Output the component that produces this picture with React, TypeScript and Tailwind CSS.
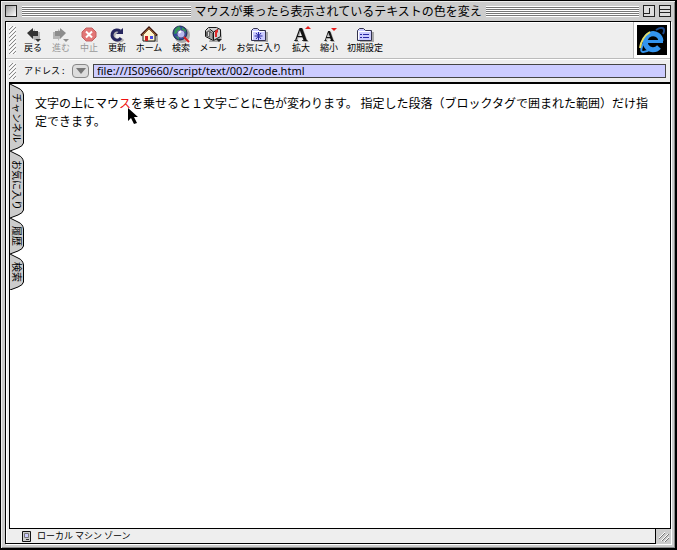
import type { ReactNode } from 'react';

const OUTLINE = '#181818';

interface Tool {
  label: string;
  width: string;
  icon: ReactNode;
  disabled?: boolean;
}

function ArrowIcon({ fill, flip = false }: { fill: string; flip?: boolean }) {
  return (
    <svg viewBox="0 0 20 20" className="size-5">
      <g transform={flip ? 'translate(19 0) scale(-1 1)' : undefined}>
        <path d="M7 10l5-5v3h5v7h-5v2z" fill="#b5b5b5" />
        <path d="M4 9l6-5v3h5v5h-5v3z" fill={fill} />
      </g>
      <path d="M12 15h6l-3 3z" fill={fill} />
    </svg>
  );
}

function StopIcon() {
  return (
    <svg viewBox="0 0 20 20" className="size-5">
      <path d="M7 4h6l4 4v5l-4 4H7l-4-4V8z" fill="#e27676" stroke="#c46060" />
      <path d="M7 7.500l6 6M13 7.500l-6 6" stroke="#fff" strokeWidth="2" />
    </svg>
  );
}

function RefreshIcon() {
  return (
    <svg viewBox="0 0 20 20" className="size-5" fill="none">
      <path d="M16 15a5 5 0 1 1-1-7" stroke="#b5b5b5" strokeWidth="3" />
      <path d="M14 14a5 5 0 1 1-1-7" stroke="#26265e" strokeWidth="3" />
      <path d="M9 10h7V4z" fill="#26265e" />
    </svg>
  );
}

function HomeIcon() {
  return (
    <svg viewBox="0 0 20 20" className="size-5">
      <path d="M6 18h13v-7l-3-2z" fill="#aaa" />
      <path d="M4 11l6-6 6 6v6H4z" fill="#fff5cc" stroke={OUTLINE} />
      <path d="M2 11.500l8-8 8 8" fill="none" stroke="#3b140c" strokeWidth="2" />
      <path d="M3.500 11l6.500-6.500 6.500 6.500" fill="none" stroke="#e09a55" />
      <path d="M6 12h3v5H6z" fill="#c22" />
      <path d="M11 12h3v3h-3z" fill="#4a4ae0" />
    </svg>
  );
}

function SearchIcon() {
  return (
    <svg viewBox="0 0 20 20" className="size-5">
      <circle cx="11" cy="11" r="8" fill="#aaa" />
      <circle cx="9" cy="9" r="7" fill="#2f45a0" stroke="#20284c" />
      <path d="M4 5l4-3 2 3-3 4-4 1zM11 3l4 3-1 4-3-2zM4 12l4 1v3z" fill="#2f9556" />
      <circle cx="10" cy="10" r="4" fill="#b9b9ee" stroke="#555590" />
      <path d="M8 9l2-2" stroke="#fff" strokeWidth="2" />
      <path d="M13 13l5 5" stroke="#e02020" strokeWidth="2" />
    </svg>
  );
}

function MailIcon() {
  return (
    <svg viewBox="0 0 20 20" className="size-5">
      <path d="M6 18h10l3-4-1-8-9 2z" fill="#aaa" />
      <path d="M2.500 6.500l3-3h8l4 2v7l-7 4-8-4z" fill="#d2d2d2" stroke={OUTLINE} />
      <path d="M3 8l3-2 4 3v6l-7-3z" fill="#666" />
      <path d="M5.500 8v4M8 9v5" stroke="#ddd" />
      <path d="M10.500 16V8l-4-3M10.500 8l5-3" fill="none" stroke={OUTLINE} />
      <path d="M12 13V7l3-2v3l-1 1v4z" fill="#e22a2a" />
      <path d="M13 15h6l-3 3z" fill="#222" />
    </svg>
  );
}

function FolderIcon({ children }: { children: ReactNode }) {
  return (
    <svg viewBox="0 0 20 20" className="size-5">
      <path d="M5 8h14v10H5z" fill="#aaa" />
      <path d="M2.500 6.500l2-2h4l2 2h6v10h-14z" fill="#ccccff" stroke="#33334d" />
      <path d="M3.500 15.500v-8H15" fill="none" stroke="#fff" />
      {children}
    </svg>
  );
}

function FontSizeIcon({ larger = false }: { larger?: boolean }) {
  return (
    <svg viewBox="0 0 20 20" className="size-5">
      <text
        x={larger ? 3 : 5}
        y="17"
        fontSize={larger ? 19 : 14}
        fontWeight="700"
        fill="#111"
        className="font-['Liberation_Serif',serif] drop-shadow-[1px_1px_0_#aaaaaa]"
      >
        A
      </text>
      <path d={larger ? 'M14 5h6l-3-3z' : 'M12 4h6l-3 3z'} fill="#e81c1c" />
    </svg>
  );
}

const tools: Tool[] = [
  { label: '戻る', width: 'w-7', icon: <ArrowIcon fill="#333" /> },
  { label: '進む', width: 'w-7', icon: <ArrowIcon fill="#8c8c8c" flip />, disabled: true },
  { label: '中止', width: 'w-7', icon: <StopIcon />, disabled: true },
  { label: '更新', width: 'w-7', icon: <RefreshIcon /> },
  { label: 'ホーム', width: 'w-9', icon: <HomeIcon /> },
  { label: '検索', width: 'w-7', icon: <SearchIcon /> },
  { label: 'メール', width: 'w-9', icon: <MailIcon /> },
  {
    label: 'お気に入り',
    width: 'w-14',
    icon: (
      <FolderIcon>
        <path d="M9.500 8v8M5.500 12h8M7 9l5 6M12 9l-5 6" stroke="#2929a3" />
      </FolderIcon>
    ),
  },
  { label: '拡大', width: 'w-7', icon: <FontSizeIcon larger /> },
  { label: '縮小', width: 'w-7', icon: <FontSizeIcon /> },
  {
    label: '初期設定',
    width: 'w-11',
    icon: (
      <FolderIcon>
        <path d="M5 10.500h2M8 10.500h6M5 13.500h2M8 13.500h6" stroke="#2929a3" />
      </FolderIcon>
    ),
  },
];

const sideTabs = [
  { label: 'チャンネル', length: 67, height: 'h-[67px]' },
  { label: 'お気に入り', length: 67, height: 'h-[67px]' },
  { label: '履歴', length: 36, height: 'h-[36px]' },
  { label: '検索', length: 36, height: 'h-[36px]' },
];

function Stripes({ grow }: { grow: string }) {
  return (
    <div className={`${grow} h-[11px] bg-[repeating-linear-gradient(to_bottom,#fff_0px,#fff_1px,#777_1px,#777_2px)]`} />
  );
}

function Grip({ id }: { id: string }) {
  return (
    <svg className="h-full w-[7px] shrink-0">
      <pattern id={id} width="4" height="4" patternUnits="userSpaceOnUse">
        <path d="M-1 5L5 -1M-1 1L1 -1M3 5L5 3" stroke="#888" />
        <path d="M0 6L6 0M0 2L2 0" stroke="#fff" />
      </pattern>
      <rect width="100%" height="100%" fill={`url(#${id})`} />
    </svg>
  );
}

function TitleBar() {
  return (
    <header className="flex h-5 items-center gap-1 px-1">
      <button aria-label="閉じる" className="size-3 border border-[#222] bg-gradient-to-br from-[#999] to-white" />
      <div className="flex min-w-0 flex-1 items-center gap-1 pl-px">
        <Stripes grow="flex-[11]" />
        <h1 className="text-xs whitespace-nowrap">マウスが乗ったら表示されているテキストの色を変え</h1>
        <Stripes grow="flex-[10]" />
      </div>
      <button aria-label="ズーム" className="size-3 border border-[#222] bg-[#ddd]">
        <span className="block size-1.5 border-r border-b border-[#222]" />
      </button>
      <button aria-label="折りたたむ" className="flex size-3 flex-col justify-center border border-[#222] bg-[#ddd]">
        <span className="h-1 w-full border-y border-[#222]" />
      </button>
    </header>
  );
}

function ExplorerLogo() {
  return (
    <svg viewBox="0 0 30 30" className="size-[30px] bg-black" role="img" aria-label="Internet Explorer" fill="none">
      <path d="M19 5c6-4 10-2 7 4" stroke="#1c4a8c" strokeWidth="2" />
      <path d="M24 16a8 8 0 1 0-2 6" stroke="#3394ee" strokeWidth="5" />
      <path d="M10 16.500h16" stroke="#3394ee" strokeWidth="3" />
      <path d="M8 16C4 22 3 27 6 27c2 0 5-1 8-3" stroke="#3394ee" strokeWidth="2" />
      <path d="M13 7C8 10 4 16 3 23" stroke="#e8dd62" strokeWidth="2" />
    </svg>
  );
}

function Toolbar() {
  return (
    <div className="flex border-b border-[#bbb]">
      <nav className="flex min-w-0 flex-1 items-center gap-[3px] border-r border-[#bbb] pl-[3px]">
        <div className="h-7">
          <Grip id="toolbar-grip" />
        </div>
        <div className="flex pb-1">
          {tools.map((tool) => (
            <button
              key={tool.label}
              disabled={tool.disabled}
              className={`${tool.width} flex shrink-0 flex-col items-center text-[9px] leading-[8px] whitespace-nowrap disabled:text-[#999]`}
            >
              {tool.icon}
              {tool.label}
            </button>
          ))}
        </div>
      </nav>
      <div className="border-[3px] border-white">
        <ExplorerLogo />
      </div>
    </div>
  );
}

function AddressBar() {
  return (
    <form className="flex h-[23px] items-center gap-1 border-t border-white pr-1 pb-px pl-[3px]">
      <div className="h-4">
        <Grip id="address-grip" />
      </div>
      <label htmlFor="address" className="w-[48px] pl-1 text-[9px] whitespace-nowrap">
        アドレス :
      </label>
      <button
        type="button"
        aria-label="履歴を表示"
        className="flex h-[14px] w-[17px] items-center justify-center rounded border border-[#888] bg-[#ddd]"
      >
        <svg viewBox="0 0 10 6" className="h-1.5 w-2.5">
          <path d="M0 0h10L5 6z" fill="#777" />
        </svg>
      </button>
      <input
        id="address"
        defaultValue="file:///IS09660/script/text/002/code.html"
        className="h-[14px] min-w-0 flex-1 border border-[#444] bg-[#ccccff] px-[3px] font-['Noto_Sans',sans-serif] text-[11px] leading-3"
      />
    </form>
  );
}

function SideTabs() {
  return (
    <aside className="flex w-[14px] shrink-0 flex-col">
      {sideTabs.map(({ label, length, height }) => (
        <button key={label} className={`${height} relative flex items-center justify-center`}>
          <svg viewBox={`0 0 14 ${length}`} className={`${height} absolute inset-0 w-[14px]`}>
            <path
              d={`M0 0L8 4Q13 6 13.500 11V${length - 8}Q13 ${length - 5} 8 ${length - 3}L0 ${length}`}
              fill="#ccc"
              stroke="#000"
            />
          </svg>
          <span className="relative text-[10px] leading-3 [text-orientation:sideways] [writing-mode:vertical-rl]">
            {label}
          </span>
        </button>
      ))}
    </aside>
  );
}

function StatusBar() {
  return (
    <footer className="flex h-[14px]">
      <div className="flex flex-1 items-center gap-1.5 pl-4 text-[9px] leading-3">
        <svg viewBox="0 0 9 11" className="h-[11px] w-[9px]">
          <path d="M.5 .5h8v10h-8z" fill="#ccc" stroke="#111" />
          <path d="M2.500 2.500h4v4h-4z" fill="#ccf" stroke="#777" />
          <path d="M4 8.500h3" stroke="#333" />
        </svg>
        <span>ローカル マシン ゾーン</span>
      </div>
      {/* Resize corner, runs over the panel border */}
      <div className="-mr-px -mb-px flex w-4 items-center justify-center border-l border-black bg-[#ccc]">
        <svg viewBox="0 0 12 12" className="size-3">
          <path d="M1 8l6-6M4 10l7-7M7 11l4-4" stroke="#777" />
          <path d="M1 7l6-6M3 10l7-7M6 11l5-5" stroke="#fff" />
        </svg>
      </div>
    </footer>
  );
}

export default function App() {
  return (
    <div className="flex min-h-screen flex-col border border-r-2 border-b-2 border-black bg-[#ccc] font-['Noto_Sans_CJK_JP',sans-serif] text-black shadow-[inset_1px_1px_0_#eeeeee,inset_-1px_-1px_0_#888888]">
      <TitleBar />
      <div className="mx-1 mb-1 flex flex-1 flex-col border border-black bg-[#eee] shadow-[1px_1px_0_#ffffff,inset_1px_1px_0_#ffffff]">
        <Toolbar />
        <AddressBar />
        <div className="ml-[3px] flex flex-1 border border-t-2 border-r-0 border-black bg-white">
          <SideTabs />
          <main className="relative flex-1 px-[11px] py-2.5">
            <p className="text-xs leading-[18px]">
              文字の上にマウ<span className="text-[#ee1111]">ス</span>を乗せると１文字ごとに色が変わります。 指定した段落（ブロックタグで囲まれた範囲）だけ指定できます。
            </p>
            <svg viewBox="0 0 12 17" className="absolute top-6 left-[103px] h-[17px] w-3">
              <path d="M1 0v13l3-3 3 6 3-1-3-6h4z" fill="#000" />
            </svg>
          </main>
        </div>
        <StatusBar />
      </div>
    </div>
  );
}
